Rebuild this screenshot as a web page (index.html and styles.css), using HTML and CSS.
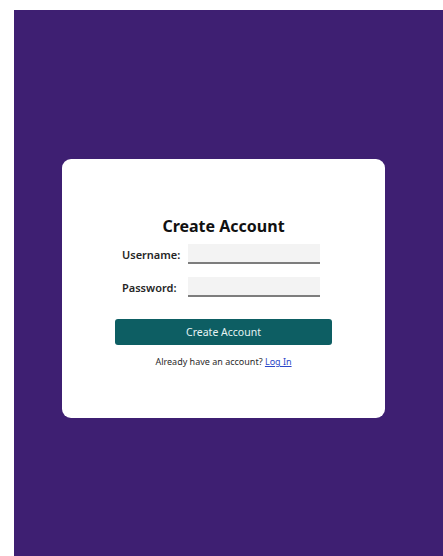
FILE: index.html
```html
<!DOCTYPE html>
<html lang="en">
<head>
<meta charset="utf-8">
<title>Create Account</title>
<link rel="stylesheet" href="styles.css">
</head>
<body>
<main class="backdrop">
  <section class="card">
    <h1 class="card-title">Create Account</h1>
    <form class="signup-form">
      <div class="field">
        <label class="field-label" for="username">Username:</label>
        <input class="field-input" id="username" type="text">
      </div>
      <div class="field">
        <label class="field-label" for="password">Password:</label>
        <input class="field-input" id="password" type="password">
      </div>
      <button class="submit-btn" type="button">Create Account</button>
    </form>
    <p class="login-hint">Already have an account? <a href="#" class="login-link">Log In</a></p>
  </section>
</main>
</body>
</html>
```
FILE: styles.css
```css
html, body {
  height: 100%;
}

body {
  margin: 0;
  padding: 10px 0 0 14px;
  box-sizing: border-box;
  background: #ffffff;
  font-family: "Noto Sans", "Open Sans", sans-serif;
}

.backdrop {
  height: 100%;
  background: #3e1f72;
  display: flex;
  align-items: flex-start;
  padding: 149px 0 0 48px;
  box-sizing: border-box;
}

.card {
  width: 323px;
  height: 259px;
  padding-top: 6px;
  background: #ffffff;
  border-radius: 9px;
  display: flex;
  flex-direction: column;
  align-items: center;
  justify-content: center;
  box-sizing: border-box;
}

.card-title {
  margin: 0 0 7px;
  font-size: 16px;
  font-weight: 700;
  color: #111111;
  line-height: 22px;
}

.signup-form {
  display: flex;
  flex-direction: column;
  align-items: center;
}

.field {
  display: flex;
  align-items: center;
  gap: 9px;
  margin-bottom: 13px;
  margin-left: -5px;
}

.field-label {
  width: 57px;
  font-size: 11px;
  font-weight: 600;
  color: #262626;
}

.field-input {
  width: 132px;
  height: 20px;
  box-sizing: border-box;
  border: none;
  border-bottom: 2px solid #7d7d7d;
  background: #f3f3f3;
  padding: 0 4px;
  font: inherit;
  font-size: 11px;
}

.submit-btn {
  width: 217px;
  height: 26px;
  margin-top: 9px;
  border: none;
  border-radius: 3px;
  background: #0d5e63;
  color: #e6f4f4;
  font-family: inherit;
  font-size: 10.5px;
}

.login-hint {
  margin: 10px 0 0;
  font-size: 9px;
  color: #2a2a2a;
}

.login-link {
  color: #2b47c8;
  text-decoration: underline;
}
```
